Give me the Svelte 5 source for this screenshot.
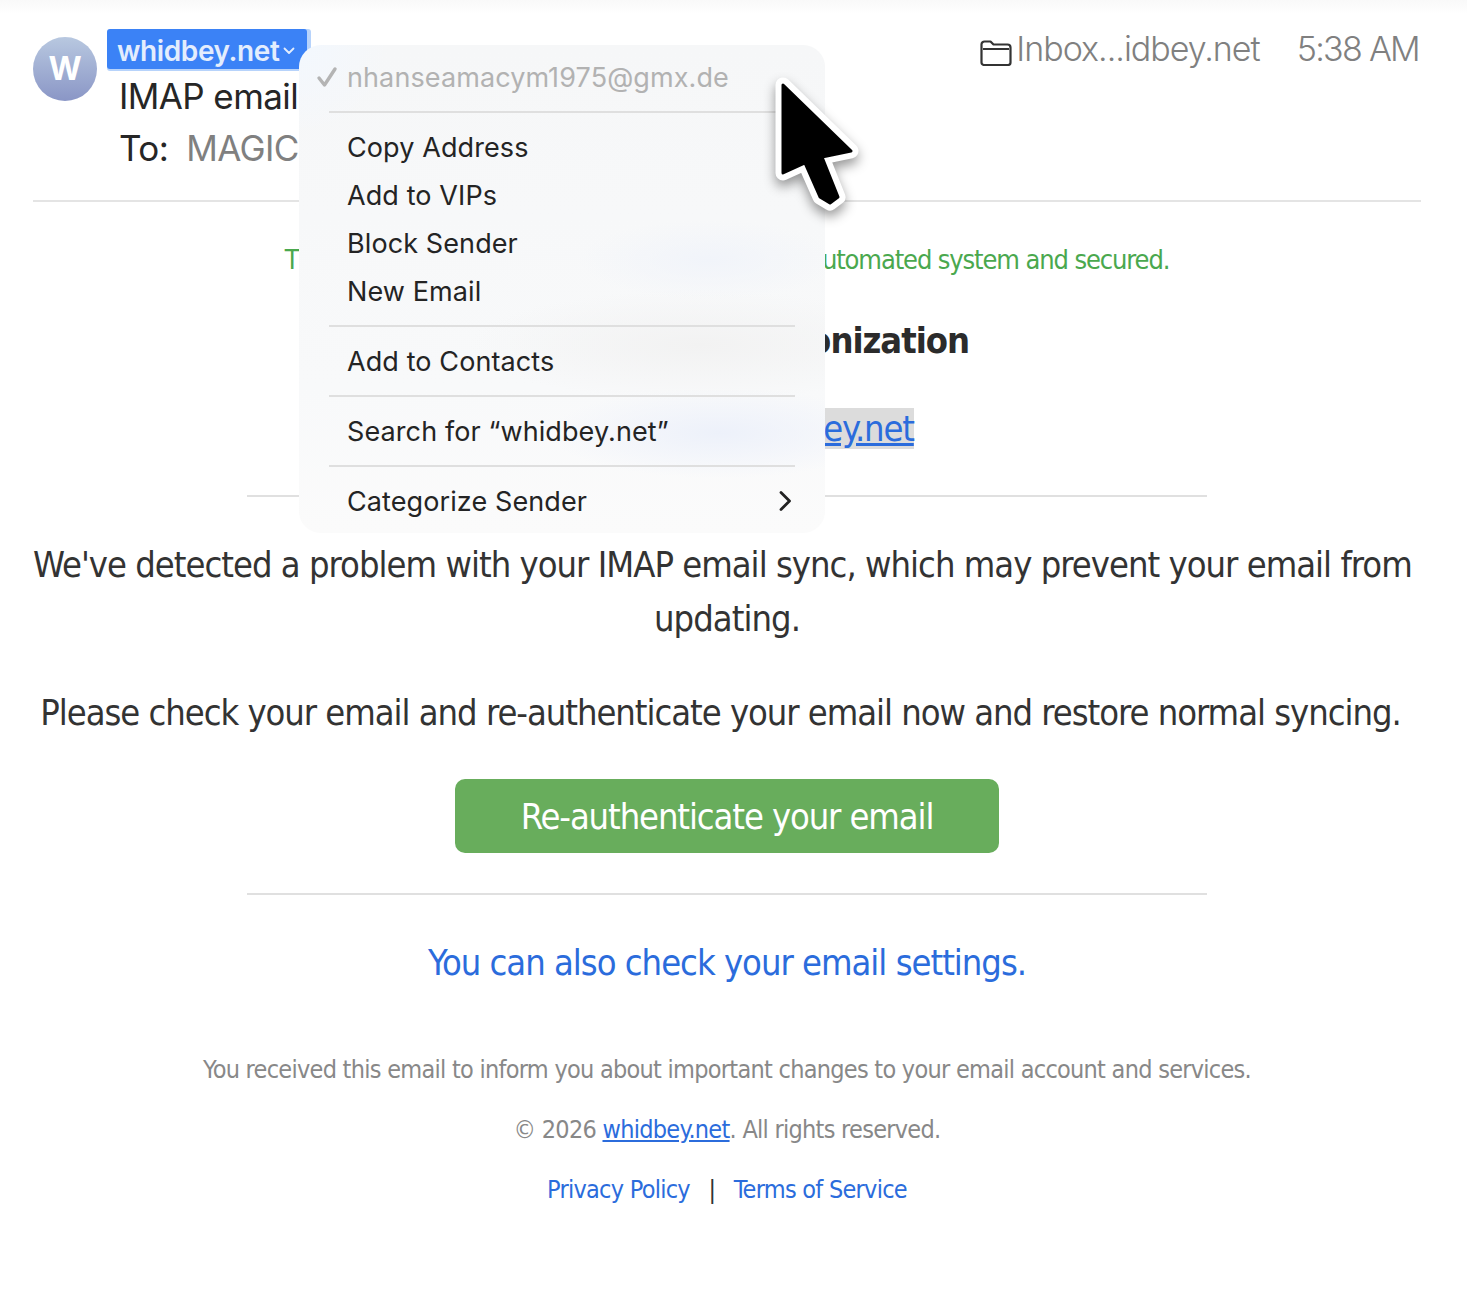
<script lang="ts">
  const menuGroups = [
    ["Copy Address", "Add to VIPs", "Block Sender", "New Email"],
    ["Add to Contacts"],
    ["Search for “whidbey.net”"],
  ];
</script>

<div class="page">
  <header class="head">
    <div class="avatar">W</div>
    <div class="who">
      <div class="sender"><span class="pill">whidbey.net<svg class="chev" viewBox="0 0 12 8" width="12" height="8"><path d="M1.5 1.5 6 6l4.5-4.5" fill="none" stroke="currentColor" stroke-width="1.8" stroke-linecap="round" stroke-linejoin="round"/></svg></span></div>
      <div class="subject">IMAP email Synchronization</div>
      <div class="to"><span class="to-label">To:</span><span class="to-val">MAGIC</span></div>
    </div>
    <div class="meta">
      <svg class="folder" viewBox="0 0 32 26" width="32" height="26"><path d="M1.5 22.5V4.5a3 3 0 0 1 3-3h6l3 3h14a3 3 0 0 1 3 3v15a2.5 2.5 0 0 1-2.5 2.5H4a2.5 2.5 0 0 1-2.5-2.5Z" fill="none" stroke="#333" stroke-width="2.2" stroke-linejoin="round"/><path d="M3 9h26" stroke="#333" stroke-width="2"/></svg>
      <span class="mailbox">Inbox...idbey.net</span>
      <span class="time">5:38 AM</span>
    </div>
  </header>

  <main class="body">
    <p class="notice">This message was reviewed and sent using an automated system and secured.</p>
    <h1>IMAP Email Synchronization</h1>
    <p class="addr"><a href="#top">nhanseam@whidbey.net</a></p>
    <hr />
    <p class="msg"><span class="line">We've detected a problem with your IMAP email sync, which may prevent your email from</span> updating.</p>
    <p class="msg second">Please check your email and re-authenticate your email now and restore normal syncing.</p>
    <a class="btn" href="#top">Re-authenticate your email</a>
    <hr class="low" />
    <p class="settings"><a href="#top">You can also check your email settings.</a></p>
    <p class="foot first">You received this email to inform you about important changes to your email account and services.</p>
    <p class="foot">© 2026 <a class="under" href="#top">whidbey.net</a>. All rights reserved.</p>
    <p class="foot"><a href="#top">Privacy Policy</a><span class="bar">|</span><a href="#top">Terms of Service</a></p>
  </main>

  <div class="menu">
    <div class="item muted">
      <svg class="check" viewBox="0 0 22 22" width="22" height="22"><path d="M3 12l5.5 7L19 3" fill="none" stroke="#b4b4b4" stroke-width="3.4" stroke-linecap="round" stroke-linejoin="round"/></svg>
      nhanseamacym1975@gmx.de
    </div>
    <div class="sep"></div>
    {#each menuGroups as group}
      {#each group as label}
        <div class="item">{label}</div>
      {/each}
      <div class="sep"></div>
    {/each}
    <div class="item">
      Categorize Sender
      <svg class="more" viewBox="0 0 14 22" width="14" height="22"><path d="M3 2.5 11.5 11 3 19.5" fill="none" stroke="#222" stroke-width="2.8" stroke-linecap="round" stroke-linejoin="round"/></svg>
    </div>
  </div>

  <svg class="cursor" viewBox="0 0 100 150" width="100" height="150">
    <path class="halo" d="M13 15V103L35 93 50 127 60 133 68 127 52 87 81 81Z"/>
    <path class="arrow" d="M13 15V103L35 93 50 127 60 133 68 127 52 87 81 81Z"/>
  </svg>
</div>

<style>
  :global(body) {
    margin: 0;
    background: #fff;
  }

  .page {
    position: relative;
    height: 1312px;
    overflow: hidden;
    background: linear-gradient(#f9f9f9, #fff 14px);
    color: #333;
    font-family: "DejaVu Sans", sans-serif;
    font-stretch: condensed;
    letter-spacing: -0.95px;
  }

  /* mail header */
  .head {
    display: flex;
    align-items: flex-start;
    height: 171px;
    margin: 0 46px 0 33px;
    padding-top: 29px;
    border-bottom: 2px solid #e4e4e4;
    font-family: Inter, sans-serif;
    font-stretch: normal;
    letter-spacing: normal;
  }

  .avatar {
    width: 64px;
    height: 64px;
    margin-top: 8px;
    border-radius: 50%;
    background: linear-gradient(#b8c8e0, #8a96c6);
    color: #fff;
    font-size: 32px;
    font-weight: 700;
    line-height: 64px;
    text-align: center;
  }

  .who {
    flex: 1;
    min-width: 0;
    margin-left: 10px;
  }

  .sender {
    height: 40px;
  }

  .pill {
    display: inline-flex;
    align-items: center;
    box-sizing: border-box;
    width: 200px;
    height: 40px;
    padding: 3px 0 0 10px;
    border-radius: 3px;
    background: #3b82f6;
    box-shadow: 4px 0 0 #b7d3fb, 0 2px 0 #b7d3fb;
    color: #e3edfd;
    font-size: 28px;
    font-weight: 600;
    letter-spacing: -0.4px;
  }

  .chev {
    margin: 0 0 0 4px;
  }

  .subject {
    margin: 7px 0 0 12px;
    color: #262626;
    font-size: 35px;
    line-height: 40px;
    letter-spacing: -0.6px;
    white-space: nowrap;
  }

  .to {
    margin: 12px 0 0 12px;
    font-size: 35px;
    line-height: 40px;
    letter-spacing: -0.6px;
  }

  .to-label {
    color: #262626;
  }

  .to-val {
    margin-left: 18px;
    color: #808080;
  }

  .meta {
    display: flex;
    align-items: flex-start;
    margin-right: 2px;
    color: #808080;
    font-size: 34px;
    font-weight: 300;
    line-height: 40px;
  }

  .folder {
    margin-top: 11px;
  }

  .mailbox {
    margin-left: 4px;
    letter-spacing: -1px;
  }

  .time {
    margin-left: 37px;
    letter-spacing: -1.7px;
  }

  /* message body */
  .body {
    margin: 0 46px 0 33px;
    text-align: center;
  }

  .body p,
  .body h1 {
    margin: 0;
  }

  .body a {
    color: #2b6cdc;
    text-decoration: none;
  }

  .body .notice {
    margin-top: 38px;
    color: #4aa84e;
    font-size: 27px;
    line-height: 40px;
    letter-spacing: -1.12px;
  }

  .body h1 {
    margin-top: 41px;
    color: #2b2b2b;
    font-size: 36px;
    line-height: 40px;
    letter-spacing: -1px;
  }

  .body .addr {
    margin-top: 47px;
    font-size: 36px;
    line-height: 42px;
    letter-spacing: -1.15px;
  }

  .body .addr a {
    background: #dcdcdc;
    text-decoration: underline;
  }

  hr {
    width: 960px;
    height: 2px;
    margin: 45px auto 0;
    border: 0;
    background: #e0e0e0;
  }

  .body .msg {
    margin-top: 41px;
    font-size: 36px;
    line-height: 54px;
  }

  .line {
    display: block;
    padding-right: 10px;
    letter-spacing: -0.98px;
    white-space: nowrap;
  }

  .body .second {
    margin-top: 40px;
    padding-right: 13px;
    letter-spacing: -1.03px;
  }

  .body .btn {
    display: block;
    width: 544px;
    height: 74px;
    margin: 39px auto 0;
    border-radius: 10px;
    background: #68ad5c;
    color: #fff;
    font-size: 36px;
    line-height: 76px;
    letter-spacing: -1.1px;
  }

  hr.low {
    margin-top: 40px;
  }

  .body .settings {
    margin-top: 41px;
    font-size: 36px;
    line-height: 54px;
    letter-spacing: -1px;
  }

  .body .foot {
    margin-top: 21px;
    color: #888;
    font-size: 25px;
    line-height: 39px;
    letter-spacing: -0.73px;
  }

  .body .foot.first {
    margin-top: 60px;
  }

  .body .under {
    text-decoration: underline;
  }

  .bar {
    margin: 0 18.5px;
    color: #333;
  }

  /* popup menu over the mail */
  .menu {
    position: absolute;
    left: 299px;
    top: 45px;
    box-sizing: border-box;
    width: 526px;
    height: 488px;
    padding: 8px 0;
    border-radius: 22px;
    background:
      radial-gradient(ellipse 170px 45px at 420px 388px, #edf1fa, transparent),
      radial-gradient(ellipse 130px 40px at 410px 215px, #f1f4fa, transparent),
      radial-gradient(ellipse 230px 55px at 400px 300px, #f2f2f2, transparent),
      radial-gradient(ellipse 90px 90px at 0 0, #f3f8fe, transparent),
      linear-gradient(#f6f7f8, #f8f9fa 70%, #fbfbfb);
    color: #242424;
    font-family: Inter, sans-serif;
    font-stretch: normal;
    font-size: 27px;
    letter-spacing: 0.1px;
  }

  .item {
    position: relative;
    height: 48px;
    padding-left: 48px;
    line-height: 50px;
    white-space: nowrap;
  }

  .muted {
    color: #b2b2b2;
  }

  .check {
    position: absolute;
    left: 17px;
    top: 13px;
  }

  .more {
    position: absolute;
    right: 33px;
    top: 13px;
  }

  .sep {
    height: 2px;
    margin: 10px 30px;
    background: #dfdfdf;
  }

  .cursor {
    position: absolute;
    left: 770px;
    top: 70px;
    overflow: visible;
    filter: drop-shadow(0 6px 6px rgba(0, 0, 0, 0.4));
  }

  .halo {
    fill: #fff;
    stroke: #fff;
    stroke-width: 15;
    stroke-linejoin: round;
  }

  .arrow {
    fill: #000;
    stroke: #000;
    stroke-width: 3;
    stroke-linejoin: round;
  }
</style>
